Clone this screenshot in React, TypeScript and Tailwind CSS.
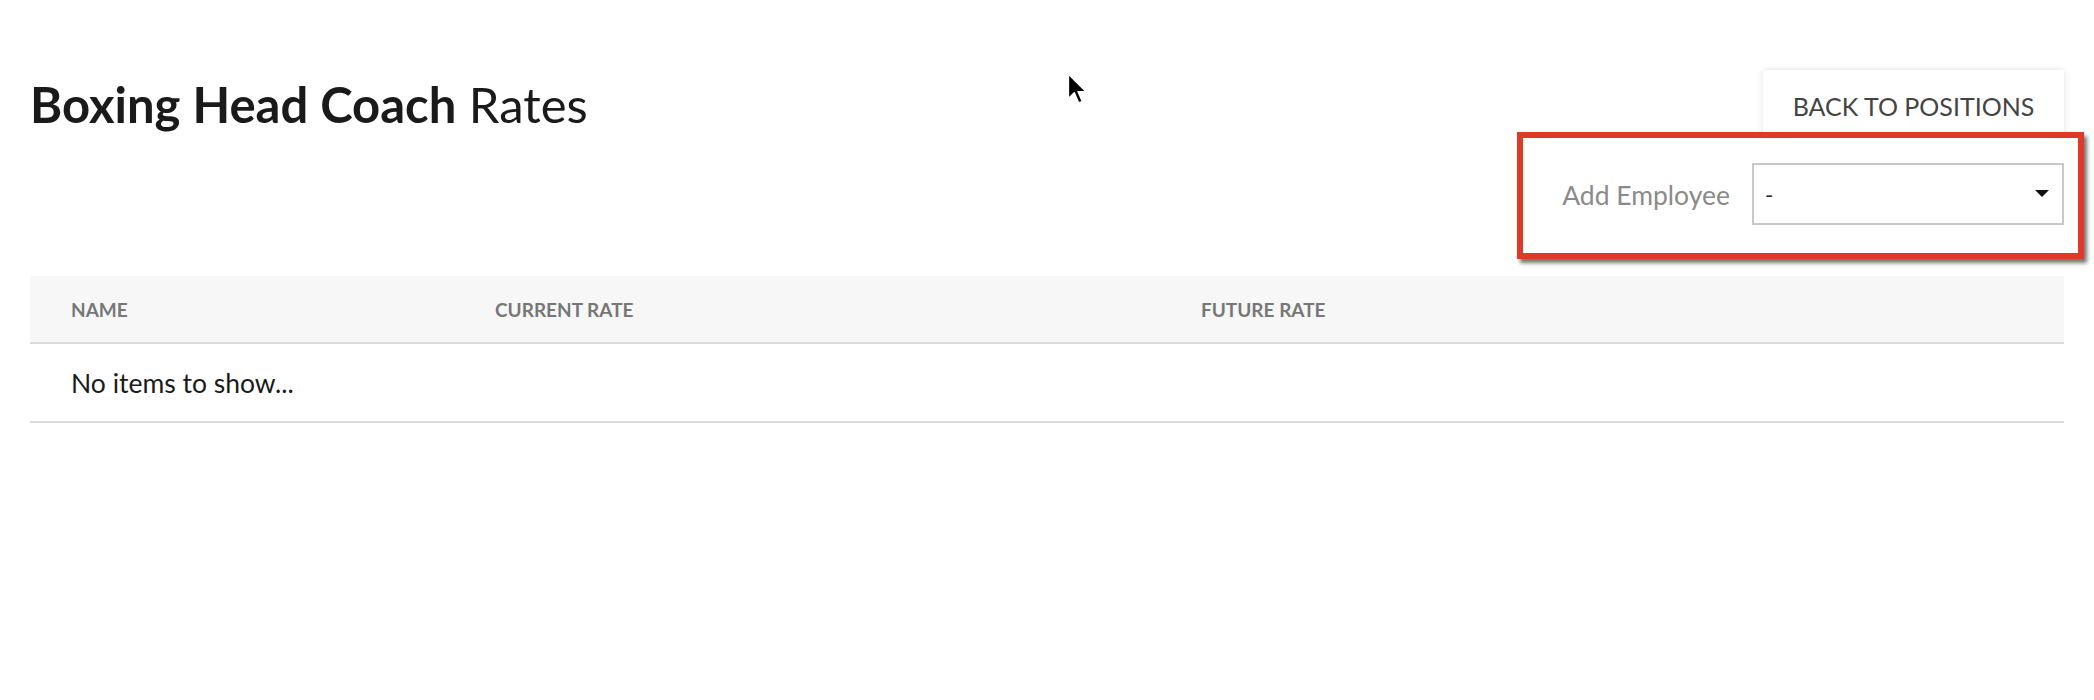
import React from 'react'

function Cursor() {
  return (
    <svg
      className="absolute left-[1064px] top-[70px]"
      width="26"
      height="38"
      viewBox="0 0 24 34"
    >
      <path
        d="M4 3 L4 26 L9.5 20.5 L13.5 30 L17 28.5 L13 19.5 L20.5 19.5 Z"
        fill="#000"
        stroke="#fff"
        strokeWidth="1.5"
        strokeLinejoin="round"
      />
    </svg>
  )
}

function App() {
  return (
    <div className="relative min-h-[700px] bg-white font-['Lato',sans-serif]">
      <Cursor />
      <div className="px-[30px] pt-[70px]">
        <div className="flex items-start justify-between">
          <h1 className="mt-[10px] text-[49px] leading-none text-[#1a1a1a]">
            <span className="font-bold">Boxing Head Coach</span> Rates
          </h1>

          <div className="flex flex-col items-end">
            <button className="h-[72px] w-[301px] bg-white pt-[2px] text-[25px] text-[#444] shadow-[0_0_6px_rgba(0,0,0,0.12)]">
              BACK TO POSITIONS
            </button>

            {/* highlighted row */}
            <div className="relative -mr-[20px] -mt-[10px] flex items-center gap-[22px] border-[6px] border-[#e0392b] bg-white pb-[28px] pl-[39px] pr-[14px] pt-[25px] shadow-[3px_4px_4px_rgba(0,0,0,0.55)]">
              <span className="pt-[4px] text-[26.5px] text-[#8a8a8a]">Add Employee</span>
              <div className="flex h-[62px] w-[312px] items-center justify-between border-2 border-[#c8c8c8] pl-[11px] pr-[13px]">
                <span className="text-[22px] text-[#222]">-</span>
                <svg width="14" height="8" viewBox="0 0 14 8">
                  <path d="M0 0 L14 0 L7 7 Z" fill="#111" />
                </svg>
              </div>
            </div>
          </div>
        </div>

        <div className="mt-[17px]">
          <div className="flex h-[68px] items-center border-b-2 border-[#dcdcdc] bg-[#f7f7f7] pt-[2px] text-[19px] font-bold text-[#777]">
            <div className="w-[424px] pl-[41px]">NAME</div>
            <div className="w-[706px] pl-[41px]">CURRENT RATE</div>
            <div className="pl-[41px]">FUTURE RATE</div>
          </div>
          <div className="flex h-[79px] items-center border-b-2 border-[#dcdcdc] pl-[41px] pt-[3px] text-[26.5px] text-[#1a1a1a]">
            No items to show...
          </div>
        </div>
      </div>
    </div>
  )
}

export default App
